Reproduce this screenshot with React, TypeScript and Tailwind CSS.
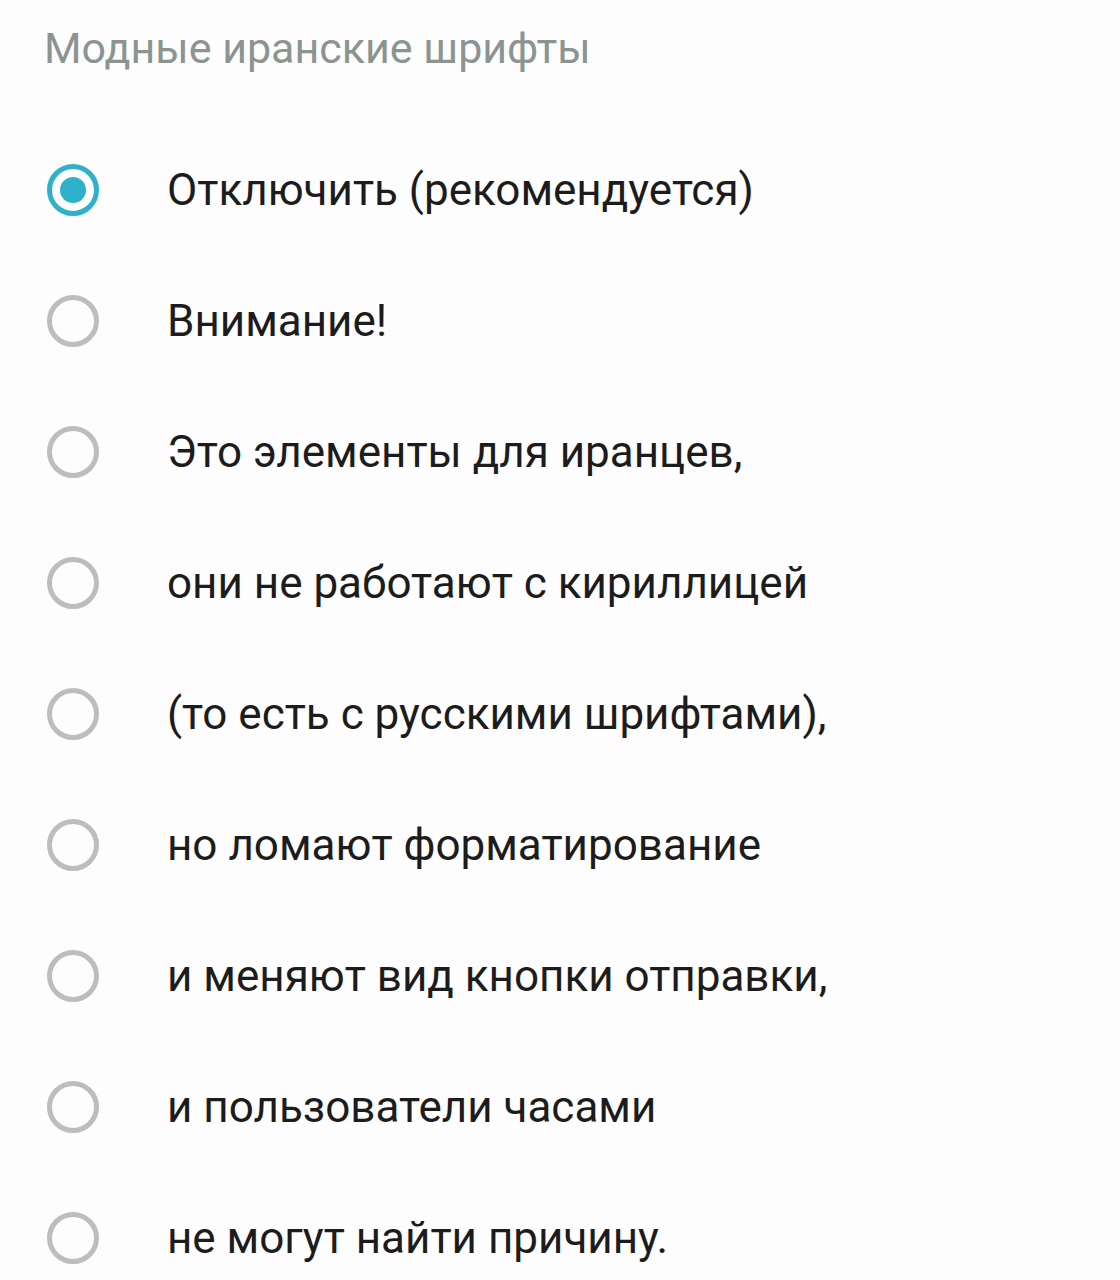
import React from "react";

const items = [
  "Отключить (рекомендуется)",
  "Внимание!",
  "Это элементы для иранцев,",
  "они не работают с кириллицей",
  "(то есть с русскими шрифтами),",
  "но ломают форматирование",
  "и меняют вид кнопки отправки,",
  "и пользователи часами",
  "не могут найти причину.",
];

export default function App() {
  return (
    <div
      className="w-[1120px] h-[1280px] bg-[#fdfdfd] overflow-hidden"
      style={{ fontFamily: "Roboto, 'Noto Sans', sans-serif" }}
    >
      <div className="h-[96px] flex items-center pl-[44px]">
        <span className="text-[43px] leading-none text-[#8b9491]">Модные иранские шрифты</span>
      </div>
      <div className="mt-[28px] flex flex-col">
        {items.map((t, i) => (
          <div key={i} className="h-[131px] flex items-center pl-[47px]">
            {i === 0 ? (
              <div className="w-[52px] h-[52px] rounded-full border-[5px] border-[#2eb1c9] flex items-center justify-center shrink-0">
                <div className="w-[26px] h-[26px] rounded-full bg-[#2eb1c9]" />
              </div>
            ) : (
              <div className="w-[52px] h-[52px] rounded-full border-[5px] border-[#bdbdbd] shrink-0" />
            )}
            <span className="ml-[68px] text-[44px] text-[#1c1c1c] leading-none">{t}</span>
          </div>
        ))}
      </div>
    </div>
  );
}
